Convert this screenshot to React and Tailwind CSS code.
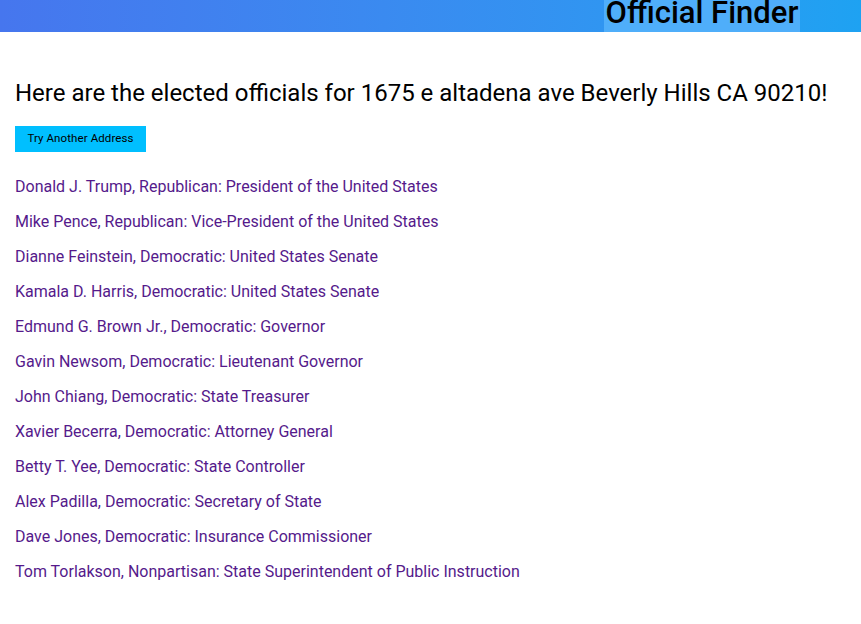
import React from "react";

const officials = [
  "Donald J. Trump, Republican: President of the United States",
  "Mike Pence, Republican: Vice-President of the United States",
  "Dianne Feinstein, Democratic: United States Senate",
  "Kamala D. Harris, Democratic: United States Senate",
  "Edmund G. Brown Jr., Democratic: Governor",
  "Gavin Newsom, Democratic: Lieutenant Governor",
  "John Chiang, Democratic: State Treasurer",
  "Xavier Becerra, Democratic: Attorney General",
  "Betty T. Yee, Democratic: State Controller",
  "Alex Padilla, Democratic: Secretary of State",
  "Dave Jones, Democratic: Insurance Commissioner",
  "Tom Torlakson, Nonpartisan: State Superintendent of Public Instruction",
];

export default function App() {
  return (
    <div className="w-[861px] min-h-[624px] bg-white" style={{ fontFamily: "Roboto, 'Liberation Sans', sans-serif" }}>
      <header className="h-8 flex justify-end bg-gradient-to-r from-[#4676ee] to-[#1ea2f2]">
        <div className="mr-[61px] w-[196px] h-8 overflow-hidden bg-[#4faefa] text-black text-[31px] leading-[25px] font-medium text-center whitespace-nowrap">
          Official Finder
        </div>
      </header>
      <main className="px-[15px]">
        <h2 className="mt-[45px] text-[24px] leading-8 text-black">
          Here are the elected officials for 1675 e altadena ave Beverly Hills CA 90210!
        </h2>
        <button className="mt-[17px] w-[131px] h-[26px] bg-[#00bfff] text-[11.5px] tracking-[0.1px] text-black">
          Try Another Address
        </button>
        <ul className="mt-[24px] flex flex-col gap-[14px]">
          {officials.map((o) => (
            <li key={o} className="text-[16px] leading-[21px] text-[#551a8b]">
              {o}
            </li>
          ))}
        </ul>
      </main>
    </div>
  );
}
